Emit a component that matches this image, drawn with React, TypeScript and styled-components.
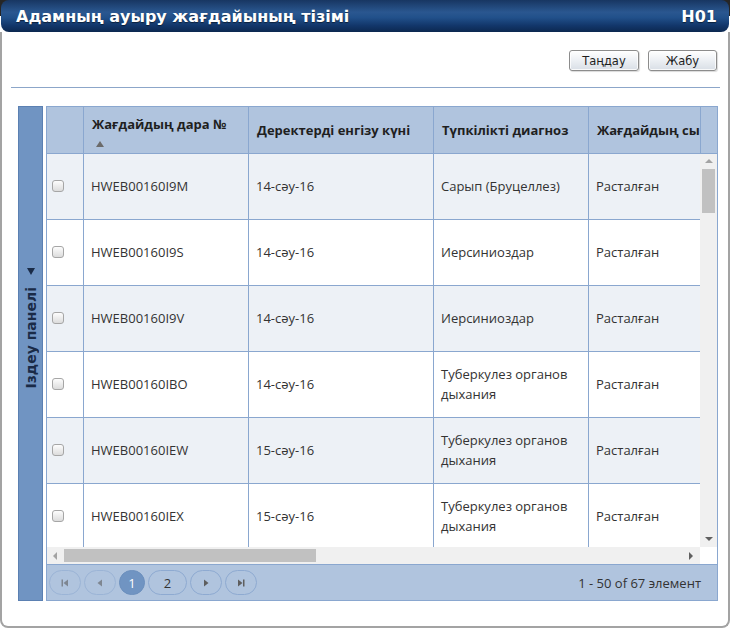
import React from 'react';
import styled, { createGlobalStyle } from 'styled-components';

const GlobalStyle = createGlobalStyle`
  html, body {
    margin: 0;
    padding: 0;
    background: #fff;
  }
  * {
    box-sizing: border-box;
  }
`;

const BORDER = '#8aa7cf';
const HEADER_BG = '#b0c4de';
const COLUMNS = '37px 165px 185px 155px 170px';

const Screen = styled.div`
  width: 730px;
  height: 628px;
  display: flex;
  flex-direction: column;
  background: linear-gradient(to bottom, #262626 0, #262626 16px, #fff 16px);
  overflow: hidden;
`;

const TitleBar = styled.div`
  height: 32px;
  margin: 0 1px;
  flex-shrink: 0;
  border-radius: 8px;
  display: flex;
  align-items: center;
  justify-content: space-between;
  padding: 0 12px 0 15px;
  background: linear-gradient(to bottom, #183662 0%, #2a5790 38%, #21508a 55%, #12366a 80%, #0c2850 100%);
  color: #fff;
  font-family: 'DejaVu Sans', Verdana, sans-serif;
  font-weight: bold;
  font-size: 16px;
  text-shadow: 0 1px 1px rgba(0, 0, 0, 0.5);
`;

const Body = styled.div`
  flex: 1;
  display: flex;
  flex-direction: column;
  background: #fff;
  border-left: 2px solid #a3a3a3;
  border-right: 2px solid #a3a3a3;
  border-bottom: 2px solid #a3a3a3;
  border-radius: 0 0 8px 8px;
`;

const Toolbar = styled.div`
  display: flex;
  justify-content: flex-end;
  gap: 9px;
  padding: 18px 11px 0 0;
`;

const Button = styled.button<{ $width: number }>`
  width: ${(p) => p.$width}px;
  height: 21px;
  padding: 0;
  border: 1px solid #8c8c8c;
  border-radius: 3px;
  background: linear-gradient(to bottom, #ffffff 0%, #eef1f5 45%, #d9dfe6 100%);
  box-shadow: inset 0 0 0 1px rgba(255, 255, 255, 0.8), 1px 1px 1px rgba(0, 0, 0, 0.15);
  font-family: 'DejaVu Sans', Verdana, sans-serif;
  font-size: 11.5px;
  color: #1e1e1e;
`;

const Divider = styled.div`
  height: 1px;
  margin: 16px 8px 0 9px;
  background: #8ca6c9;
`;

const Content = styled.div`
  display: flex;
  gap: 3px;
  height: 495px;
  margin: 18px 10px 0 16px;
`;

const SearchPanel = styled.div`
  width: 25px;
  flex-shrink: 0;
  display: flex;
  flex-direction: column;
  align-items: center;
  justify-content: center;
  gap: 12px;
  padding-bottom: 50px;
  background: #7094c2;
  border: 1px solid #5b80b2;
  color: #1a2b47;
`;

const PanelArrow = styled.div`
  width: 0;
  height: 0;
  border-left: 4px solid transparent;
  border-right: 4px solid transparent;
  border-top: 7px solid #1a2b47;
`;

const PanelLabel = styled.div`
  writing-mode: vertical-rl;
  transform: rotate(180deg);
  font-family: 'DejaVu Sans', Verdana, sans-serif;
  font-weight: bold;
  font-size: 14px;
  white-space: nowrap;
`;

const Grid = styled.div`
  flex: 1;
  display: flex;
  flex-direction: column;
  border: 1px solid ${BORDER};
  min-width: 0;
`;

const HeaderBar = styled.div`
  display: flex;
  height: 47px;
  background: ${HEADER_BG};
  border-bottom: 1px solid ${BORDER};
`;

const Viewport = styled.div`
  width: 653px;
  overflow: hidden;
`;

const HeaderRow = styled.div`
  display: grid;
  grid-template-columns: ${COLUMNS};
  height: 46px;
  width: max-content;
`;

const HeaderCell = styled.div<{ $stacked?: boolean }>`
  border-right: 1px solid ${BORDER};
  padding: ${(p) => (p.$stacked ? '8px 8px 0' : '0 8px')};
  display: flex;
  flex-direction: column;
  justify-content: ${(p) => (p.$stacked ? 'flex-start' : 'center')};
  font-family: 'Open Sans', sans-serif;
  font-weight: bold;
  font-size: 13px;
  color: #1f1f1f;
  white-space: nowrap;
`;

const SortArrow = styled.span`
  margin: 8px 0 0 4px;
  width: 0;
  height: 0;
  border-left: 4px solid transparent;
  border-right: 4px solid transparent;
  border-bottom: 6px solid #6b6b6b;
`;

const HeaderSpacer = styled.div`
  flex: 1;
  border-left: 1px solid ${BORDER};
`;

const BodyArea = styled.div`
  display: flex;
  height: 393px;
`;

const Rows = styled.div`
  width: 653px;
  overflow: hidden;
`;

const Row = styled.div<{ $alt: boolean }>`
  display: grid;
  grid-template-columns: ${COLUMNS};
  height: 66px;
  width: max-content;
  border-bottom: 1px solid ${BORDER};
  background: ${(p) => (p.$alt ? '#edf1f6' : '#fff')};
`;

const Cell = styled.div`
  border-right: 1px solid ${BORDER};
  padding: 0 8px 2px 7px;
  display: flex;
  align-items: center;
  font-family: 'Open Sans', sans-serif;
  font-size: 13px;
  line-height: 20px;
  color: #333;
`;

const CheckCell = styled.div`
  border-right: 1px solid ${BORDER};
  display: flex;
  align-items: center;
  padding: 0 0 2px 5px;
`;

const CheckBox = styled.span`
  width: 12px;
  height: 12px;
  border: 1px solid #a6a6a6;
  border-radius: 3px;
  background: linear-gradient(to bottom, #fdfdfd, #dcdcdc);
`;

const VScroll = styled.div`
  width: 17px;
  background: #f0f0f0;
  display: flex;
  flex-direction: column;
  align-items: center;
  justify-content: space-between;
  padding: 5px 0 6px;
`;

const VThumb = styled.div`
  width: 13px;
  height: 44px;
  margin-top: 6px;
  background: #c1c1c1;
`;

const Track = styled.div`
  flex: 1;
  display: flex;
  flex-direction: column;
  align-items: center;
`;

const Tri = styled.span<{ $dir: 'up' | 'down' | 'left' | 'right'; $color?: string }>`
  width: 0;
  height: 0;
  ${(p) => {
    const c = p.$color || '#a3a3a3';
    switch (p.$dir) {
      case 'up':
        return `border-left:4px solid transparent;border-right:4px solid transparent;border-bottom:4px solid ${c};`;
      case 'down':
        return `border-left:4px solid transparent;border-right:4px solid transparent;border-top:4px solid ${c};`;
      case 'left':
        return `border-top:4px solid transparent;border-bottom:4px solid transparent;border-right:4px solid ${c};`;
      default:
        return `border-top:4px solid transparent;border-bottom:4px solid transparent;border-left:4px solid ${c};`;
    }
  }}
`;

const HScrollRow = styled.div`
  display: flex;
  height: 17px;
`;

const HScroll = styled.div`
  width: 653px;
  background: #f0f0f0;
  display: flex;
  align-items: center;
  padding: 0 7px 0 6px;
`;

const HThumb = styled.div`
  width: 252px;
  height: 13px;
  margin-left: 7px;
  background: #c1c1c1;
`;

const Corner = styled.div`
  flex: 1;
  background: #fff;
`;

const Pager = styled.div`
  flex: 1;
  display: flex;
  align-items: center;
  justify-content: space-between;
  padding: 0 16px 0 2px;
  background: ${HEADER_BG};
  border-top: 1px solid ${BORDER};
`;

const PagerButtons = styled.div`
  display: flex;
  align-items: center;
  gap: 3px;
`;

const PagerButton = styled.div<{ $width: number; $active?: boolean; $dim?: boolean }>`
  width: ${(p) => p.$width}px;
  height: 25px;
  border-radius: 13px;
  border: 1px solid ${(p) => (p.$active ? '#6b8fbd' : '#8eaad1')};
  background: ${(p) => (p.$active ? '#7094c2' : 'transparent')};
  color: ${(p) => (p.$active ? '#fff' : '#333')};
  display: flex;
  align-items: center;
  justify-content: center;
  font-family: 'Open Sans', sans-serif;
  font-size: 13px;
  opacity: ${(p) => (p.$dim ? 0.6 : 1)};
`;

const PagerInfo = styled.div`
  font-family: 'Open Sans', sans-serif;
  font-size: 13px;
  color: #333;
`;

const NavIcon = ({ kind }: { kind: 'first' | 'prev' | 'next' | 'last' }) => {
  const c = '#5e5e5e';
  return (
    <svg width="8" height="8" viewBox="0 0 8 8">
      {kind === 'first' && (
        <>
          <rect x="0.5" y="0.5" width="1.5" height="7" fill={c} />
          <polygon points="7,0.5 2.5,4 7,7.5" fill={c} />
        </>
      )}
      {kind === 'prev' && <polygon points="6,0.5 1.5,4 6,7.5" fill={c} />}
      {kind === 'next' && <polygon points="2,0.5 6.5,4 2,7.5" fill={c} />}
      {kind === 'last' && (
        <>
          <polygon points="1,0.5 5.5,4 1,7.5" fill={c} />
          <rect x="6" y="0.5" width="1.5" height="7" fill={c} />
        </>
      )}
    </svg>
  );
};

const rows = [
  { id: 'HWEB00160I9M', date: '14-сәу-16', diag: 'Сарып (Бруцеллез)' },
  { id: 'HWEB00160I9S', date: '14-сәу-16', diag: 'Иерсиниоздар' },
  { id: 'HWEB00160I9V', date: '14-сәу-16', diag: 'Иерсиниоздар' },
  { id: 'HWEB00160IBO', date: '14-сәу-16', diag: 'Туберкулез органов дыхания' },
  { id: 'HWEB00160IEW', date: '15-сәу-16', diag: 'Туберкулез органов дыхания' },
  { id: 'HWEB00160IEX', date: '15-сәу-16', diag: 'Туберкулез органов дыхания' },
];

const App: React.FC = () => {
  return (
    <Screen>
      <GlobalStyle />
      <TitleBar>
        <span>Адамның ауыру жағдайының тізімі</span>
        <span>H01</span>
      </TitleBar>
      <Body>
        <Toolbar>
          <Button $width={70}>Таңдау</Button>
          <Button $width={69}>Жабу</Button>
        </Toolbar>
        <Divider />
        <Content>
          <SearchPanel>
            <PanelArrow />
            <PanelLabel>Іздеу панелі</PanelLabel>
          </SearchPanel>
          <Grid>
            <HeaderBar>
              <Viewport>
                <HeaderRow>
                  <HeaderCell />
                  <HeaderCell $stacked>
                    <span>Жағдайдың дара №</span>
                    <SortArrow />
                  </HeaderCell>
                  <HeaderCell>Деректерді енгізу күні</HeaderCell>
                  <HeaderCell>Түпкілікті диагноз</HeaderCell>
                  <HeaderCell>Жағдайдың сыныптамасы</HeaderCell>
                </HeaderRow>
              </Viewport>
              <HeaderSpacer />
            </HeaderBar>
            <BodyArea>
              <Rows>
                {rows.map((r, i) => (
                  <Row key={r.id} $alt={i % 2 === 0}>
                    <CheckCell>
                      <CheckBox />
                    </CheckCell>
                    <Cell>{r.id}</Cell>
                    <Cell>{r.date}</Cell>
                    <Cell>{r.diag}</Cell>
                    <Cell>Расталған</Cell>
                  </Row>
                ))}
              </Rows>
              <VScroll>
                <Tri $dir="up" />
                <Track>
                  <VThumb />
                </Track>
                <Tri $dir="down" $color="#606060" />
              </VScroll>
            </BodyArea>
            <HScrollRow>
              <HScroll>
                <Tri $dir="left" />
                <HThumb />
                <Track />
                <Tri $dir="right" $color="#606060" />
              </HScroll>
              <Corner />
            </HScrollRow>
            <Pager>
              <PagerButtons>
                <PagerButton $width={32} $dim>
                  <NavIcon kind="first" />
                </PagerButton>
                <PagerButton $width={32} $dim>
                  <NavIcon kind="prev" />
                </PagerButton>
                <PagerButton $width={26} $active>
                  1
                </PagerButton>
                <PagerButton $width={39}>2</PagerButton>
                <PagerButton $width={32}>
                  <NavIcon kind="next" />
                </PagerButton>
                <PagerButton $width={32}>
                  <NavIcon kind="last" />
                </PagerButton>
              </PagerButtons>
              <PagerInfo>1 - 50 of 67 элемент</PagerInfo>
            </Pager>
          </Grid>
        </Content>
      </Body>
    </Screen>
  );
};

export default App;
